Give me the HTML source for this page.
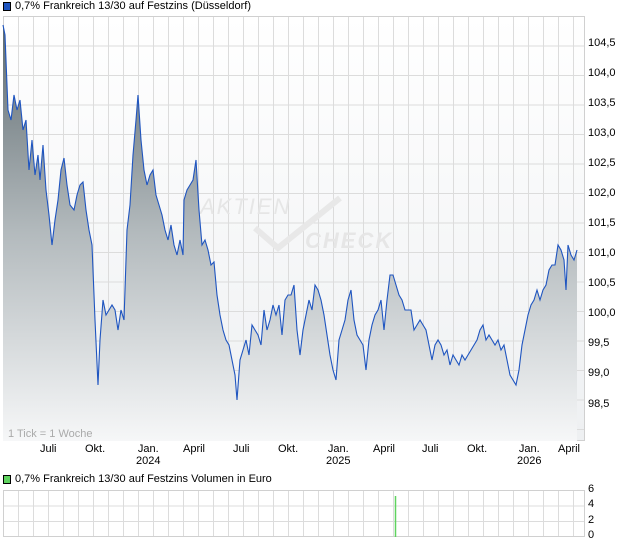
<!DOCTYPE html>
<html><head><meta charset="utf-8"><style>
body{margin:0;background:#fff;font-family:"Liberation Sans",sans-serif;width:620px;height:546px;overflow:hidden;position:relative}
.t{position:absolute;font-size:11px;color:#000;white-space:nowrap}
</style></head><body>
<svg width="620" height="546" style="position:absolute;left:0;top:0">
<defs>
<linearGradient id="g" x1="0" y1="0" x2="0" y2="1">
<stop offset="0" stop-color="#5f6b70"/><stop offset="0.5" stop-color="#b3babd"/><stop offset="1" stop-color="#f6f7f8"/>
</linearGradient>
<linearGradient id="bg" x1="0" y1="0" x2="0" y2="1">
<stop offset="0" stop-color="#fff"/><stop offset="1" stop-color="#eef0f2"/>
</linearGradient>
<pattern id="gr" x="3" y="16" width="15" height="29.5" patternUnits="userSpaceOnUse">
<path d="M0.5 0V29.5M0 0.5H15" stroke="#dcdcdc" stroke-width="1" fill="none"/>
</pattern>
<pattern id="gv" x="3" y="490" width="15" height="15.5" patternUnits="userSpaceOnUse">
<path d="M0.5 0V15.5M0 0.5H15" stroke="#dcdcdc" stroke-width="1" fill="none"/>
</pattern>
</defs>
<rect x="3" y="16" width="582" height="425" fill="url(#bg)"/>
<rect x="3" y="16" width="582" height="425" fill="url(#gr)"/>
<rect x="3.5" y="16.5" width="581" height="424" fill="none" stroke="#d0d0d0"/>
<text x="200" y="214" font-family="Liberation Sans" font-style="italic" font-size="22" fill="#e6e6e6" letter-spacing="2">AKTIEN</text>
<text x="305" y="248" font-family="Liberation Sans" font-style="italic" font-weight="bold" font-size="22" fill="#e6e6e6" letter-spacing="2">CHECK</text>
<path d="M255 228 L278 248 L340 198" stroke="#e8e8e8" stroke-width="6" fill="none"/>
<polygon fill="url(#g)" points="3,441 3,25 5,35 8,110 11,120 14,95 17,110 20,100 23,130 26,120 29,170 32,140 35,175 38,155 40,180 43,145 46,190 49,215 52,245 55,220 58,200 61,170 64,158 67,185 70,205 74,210 77,195 80,185 83,182 86,210 89,230 92,245 95,320 98,385 100,340 103,300 106,315 109,310 112,305 115,310 118,330 121,310 124,320 127,230 130,205 133,155 136,120 138,95 141,140 144,170 147,185 150,175 153,170 156,195 159,205 162,215 165,230 168,240 171,225 174,245 177,255 180,240 183,255 184,200 187,190 190,185 193,180 196,160 199,210 202,245 205,240 208,250 211,265 214,262 217,295 220,315 223,330 226,340 229,345 232,360 235,375 237,400 240,360 243,350 246,340 249,355 252,325 255,330 258,335 261,345 264,310 267,330 270,320 273,305 276,315 279,305 282,335 285,300 288,295 291,295 294,285 297,330 300,355 303,330 306,315 309,300 312,310 315,285 318,290 321,300 324,315 327,335 330,355 333,370 336,380 339,340 342,330 345,320 348,300 351,290 354,320 357,335 360,340 363,345 366,370 369,340 372,325 375,315 378,310 381,300 384,330 387,300 390,275 393,275 396,285 399,295 402,300 405,310 408,310 411,310 414,330 417,325 420,320 423,325 426,330 429,345 432,360 435,345 438,340 441,345 444,355 447,350 450,365 453,355 456,360 459,365 462,355 465,360 468,355 471,350 474,345 477,340 480,330 483,325 486,340 489,335 492,340 495,345 498,340 501,350 504,345 507,360 510,375 513,380 516,385 519,370 522,345 525,330 528,315 531,305 534,300 537,290 540,300 543,290 546,285 549,270 552,265 555,265 558,245 561,250 564,260 566,290 568,245 571,255 574,260 577,250 577,441"/>
<polyline fill="none" stroke="#1f55c0" stroke-width="1.1" points="3,25 5,35 8,110 11,120 14,95 17,110 20,100 23,130 26,120 29,170 32,140 35,175 38,155 40,180 43,145 46,190 49,215 52,245 55,220 58,200 61,170 64,158 67,185 70,205 74,210 77,195 80,185 83,182 86,210 89,230 92,245 95,320 98,385 100,340 103,300 106,315 109,310 112,305 115,310 118,330 121,310 124,320 127,230 130,205 133,155 136,120 138,95 141,140 144,170 147,185 150,175 153,170 156,195 159,205 162,215 165,230 168,240 171,225 174,245 177,255 180,240 183,255 184,200 187,190 190,185 193,180 196,160 199,210 202,245 205,240 208,250 211,265 214,262 217,295 220,315 223,330 226,340 229,345 232,360 235,375 237,400 240,360 243,350 246,340 249,355 252,325 255,330 258,335 261,345 264,310 267,330 270,320 273,305 276,315 279,305 282,335 285,300 288,295 291,295 294,285 297,330 300,355 303,330 306,315 309,300 312,310 315,285 318,290 321,300 324,315 327,335 330,355 333,370 336,380 339,340 342,330 345,320 348,300 351,290 354,320 357,335 360,340 363,345 366,370 369,340 372,325 375,315 378,310 381,300 384,330 387,300 390,275 393,275 396,285 399,295 402,300 405,310 408,310 411,310 414,330 417,325 420,320 423,325 426,330 429,345 432,360 435,345 438,340 441,345 444,355 447,350 450,365 453,355 456,360 459,365 462,355 465,360 468,355 471,350 474,345 477,340 480,330 483,325 486,340 489,335 492,340 495,345 498,340 501,350 504,345 507,360 510,375 513,380 516,385 519,370 522,345 525,330 528,315 531,305 534,300 537,290 540,300 543,290 546,285 549,270 552,265 555,265 558,245 561,250 564,260 566,290 568,245 571,255 574,260 577,250"/>
<rect x="3" y="490" width="582" height="47" fill="url(#gv)"/>
<rect x="3.5" y="490.5" width="581" height="46" fill="none" stroke="#d0d0d0"/>
<line x1="395.5" y1="496" x2="395.5" y2="537" stroke="#5fd35f" stroke-width="1.5"/>
<rect x="3.5" y="2.5" width="7" height="8" fill="#1f55c0" stroke="#000" stroke-width="1"/>
<rect x="3.5" y="475.5" width="7" height="8" fill="#5fd35f" stroke="#000" stroke-width="1"/>
</svg>
<div class="t" style="left:15px;top:0px">0,7% Frankreich 13/30 auf Festzins (Düsseldorf)</div>
<div class="t" style="left:15px;top:473px">0,7% Frankreich 13/30 auf Festzins Volumen in Euro</div>
<div class="t" style="left:8px;top:428px;color:#aaa">1 Tick = 1 Woche</div>
<div class="t" style="left:588px;top:37px">104,5</div>
<div class="t" style="left:588px;top:67px">104,0</div>
<div class="t" style="left:588px;top:97px">103,5</div>
<div class="t" style="left:588px;top:127px">103,0</div>
<div class="t" style="left:588px;top:157px">102,5</div>
<div class="t" style="left:588px;top:187px">102,0</div>
<div class="t" style="left:588px;top:217px">101,5</div>
<div class="t" style="left:588px;top:247px">101,0</div>
<div class="t" style="left:588px;top:277px">100,5</div>
<div class="t" style="left:588px;top:307px">100,0</div>
<div class="t" style="left:588px;top:337px">99,5</div>
<div class="t" style="left:588px;top:367px">99,0</div>
<div class="t" style="left:588px;top:398px">98,5</div>
<div class="t" style="left:588px;top:483px">6</div>
<div class="t" style="left:588px;top:498px">4</div>
<div class="t" style="left:588px;top:514px">2</div>
<div class="t" style="left:588px;top:529px">0</div>
<div class="t" style="left:40px;top:443px">Juli</div>
<div class="t" style="left:85px;top:443px">Okt.</div>
<div class="t" style="left:136px;top:443px;text-align:center">Jan.<br>2024</div>
<div class="t" style="left:183px;top:443px">April</div>
<div class="t" style="left:233px;top:443px">Juli</div>
<div class="t" style="left:278px;top:443px">Okt.</div>
<div class="t" style="left:326px;top:443px;text-align:center">Jan.<br>2025</div>
<div class="t" style="left:373px;top:443px">April</div>
<div class="t" style="left:422px;top:443px">Juli</div>
<div class="t" style="left:467px;top:443px">Okt.</div>
<div class="t" style="left:517px;top:443px;text-align:center">Jan.<br>2026</div>
<div class="t" style="left:558px;top:443px">April</div>
</body></html>
